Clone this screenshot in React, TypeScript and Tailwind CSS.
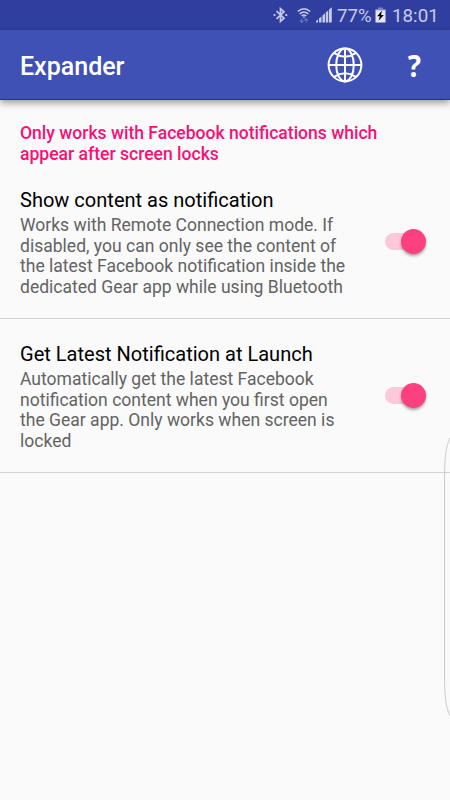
interface SettingProps {
  title: string;
  lines: string[];
}

function Bluetooth() {
  return (
    <svg width="15" height="16" viewBox="0 0 15 16" fill="none" stroke="#c5cae9" strokeWidth="1.7">
      <path d="M3.5 4.2 L11 11.2 L7.5 14.3 V1.7 L11 4.8 L3.5 11.8" />
      <path d="M0.6 8 H2.4 M12.4 8 H14.2" strokeWidth="2" />
    </svg>
  );
}

function Wifi() {
  return (
    <svg width="14" height="17" viewBox="0 0 15 17" fill="none" stroke="#c5cae9" strokeWidth="1.6">
      <path d="M0.8 4.2 Q7.5 -1.8 14.2 4.2" />
      <path d="M2.9 6.7 Q7.5 2.6 12.1 6.7" />
      <path d="M5 9 Q7.5 6.8 10 9" />
      <circle cx="7.5" cy="10.2" r="0.9" fill="#c5cae9" stroke="none" />
      <path d="M5 11.8 V15.8 M3.2 14 L5 15.8 L6.8 14 M9.8 16 V12 M8 13.8 L9.8 12 L11.6 13.8" stroke="#7079bb" strokeWidth="1.1" />
    </svg>
  );
}

function Signal() {
  return (
    <svg width="16" height="16" viewBox="0 0 16 16" fill="#c5cae9">
      <path d="M0 15.5 V14 L2 12.5 V15.5 Z" />
      <path d="M3 11.5 L5.5 9.5 V15.5 H3 Z" />
      <path d="M6.5 8.5 L9 6.2 V15.5 H6.5 Z" />
      <path d="M9.8 5.4 L12.2 3.4 V15.5 H9.8 Z" />
      <path d="M13 2.6 L15.8 0.3 V15.5 H13 Z" />
    </svg>
  );
}

function Battery() {
  return (
    <svg width="11" height="16" viewBox="0 0 11 16">
      <path d="M3 0.5 H8 V2 H10.5 V4 H0.5 V2 H3 Z" fill="#7c85c3" />
      <rect x="0.5" y="3.3" width="10" height="12.2" fill="#e4e7f8" />
      <path d="M7 3.6 L2.2 9.2 H4.8 L3.6 13.8 L8.8 7.9 H6 Z" fill="#000" />
    </svg>
  );
}

function Globe() {
  return (
    <svg width="36" height="36" viewBox="0 0 36 36" fill="none" stroke="#fff" strokeWidth="2">
      <circle cx="18" cy="18" r="16.4" />
      <ellipse cx="18" cy="18" rx="8.8" ry="16.4" />
      <path d="M18 1.6 V34.4 M1.6 18 H34.4" />
      <path d="M7.2 6.2 Q18 13.2 28.8 6.2 M7.2 29.8 Q18 22.8 28.8 29.8" />
    </svg>
  );
}

function Toggle() {
  return (
    <div className="relative w-[41px] h-[25px] flex items-center">
      <div className="w-[36px] h-[17px] rounded-full bg-[#fcc8da]" />
      <div className="absolute right-0 top-0 w-[25px] h-[25px] rounded-full bg-[#fc4080] shadow-[0_2px_3px_rgba(0,0,0,0.35)]" />
    </div>
  );
}

function Setting({ title, lines }: SettingProps) {
  return (
    <section className="h-[154px] pt-[23px] pl-5 pr-6 flex justify-between border-b border-[#d2d2d2]">
      <div className="whitespace-nowrap">
        <h2 className="text-[20.05px] leading-[25px] text-black">{title}</h2>
        <p className="mt-0.5 text-[17.55px] leading-[20.5px] text-[#636363]">
          {lines.map((line) => (
            <span key={line} className="block">{line}</span>
          ))}
        </p>
      </div>
      <div className="pt-[41px]">
        <Toggle />
      </div>
    </section>
  );
}

export default function App() {
  return (
    <div className="relative w-[450px] h-[800px] overflow-hidden bg-[#fafafa] font-[Roboto,sans-serif]">
      <div className="h-[30px] bg-[#303f9f] pl-[273px] flex items-center text-[19px] leading-[30px] text-[#c5cae9]">
        <Bluetooth />
        <div className="ml-[9px]"><Wifi /></div>
        <div className="ml-[5px]"><Signal /></div>
        <span className="ml-[5px] pt-px w-[36px] whitespace-nowrap text-[18.6px]">77%</span>
        <div className="ml-[2px]"><Battery /></div>
        <span className="ml-[6px] pt-px text-[18.8px]">18:01</span>
      </div>

      <header className="h-[70px] pl-5 flex items-center bg-[#3f51b5] border-b border-[#1535a5] text-white shadow-[0_3px_7px_rgba(0,0,0,0.38)]">
        <h1 className="w-[307px] pt-[5px] text-[25px] leading-[30px] font-medium">Expander</h1>
        <Globe />
        <span className="ml-[44px] origin-center scale-x-90 font-['Open_Sans',sans-serif] text-[31px] leading-[40px] font-bold">?</span>
      </header>

      <main>
        <p className="pt-[23px] pl-5 text-[17.55px] leading-[20.5px] font-medium text-[#f90f76]">
          Only works with Facebook notifications which
          <br />
          appear after screen locks
        </p>
        <div className="pt-[1px]">
          <Setting
            title="Show content as notification"
            lines={[
              "Works with Remote Connection mode. If",
              "disabled, you can only see the content of",
              "the latest Facebook notification inside the",
              "dedicated Gear app while using Bluetooth",
            ]}
          />
          <Setting
            title="Get Latest Notification at Launch"
            lines={[
              "Automatically get the latest Facebook",
              "notification content when you first open",
              "the Gear app. Only works when screen is",
              "locked",
            ]}
          />
        </div>
      </main>

      {/* edge panel handle */}
      <svg className="absolute right-0 top-[436px]" width="7" height="282" viewBox="0 0 7 282" fill="none" stroke="#cccccc">
        <path d="M7 1.5 C3 10 1.5 22 1.5 42 V240 C1.5 260 3 272 7 280" />
      </svg>
    </div>
  );
}
